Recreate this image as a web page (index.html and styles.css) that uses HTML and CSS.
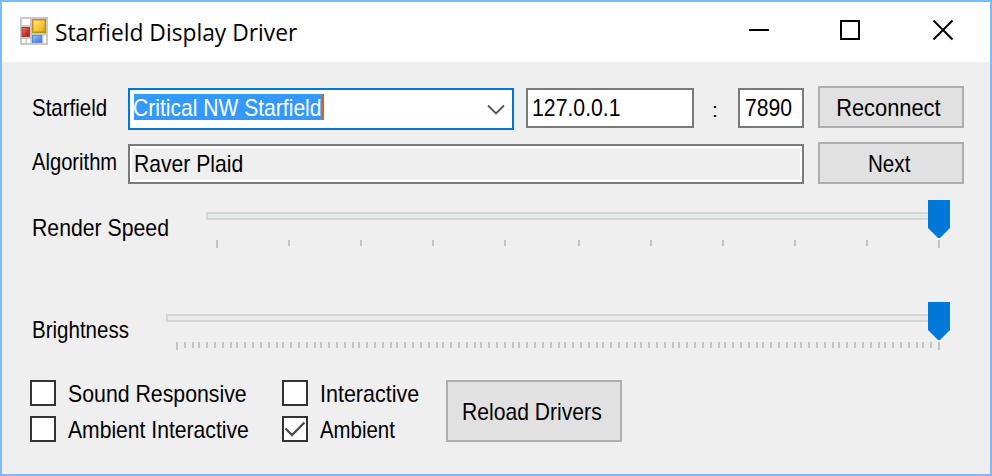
FILE: index.html
```html
<!DOCTYPE html>
<html lang="en">
<head>
<meta charset="utf-8">
<title>Starfield Display Driver</title>
<link rel="stylesheet" href="styles.css">
</head>
<body>
<div class="window">
  <header class="titlebar">
    <svg class="app-icon" width="28" height="28" viewBox="0 0 28 28">
      <defs>
        <linearGradient id="gold" x2="1" y2="1"><stop offset="0" stop-color="#ffe9a0"/><stop offset=".6" stop-color="#f8c530"/><stop offset="1" stop-color="#e0a010"/></linearGradient>
        <linearGradient id="blue" x2="1" y2="1"><stop offset="0" stop-color="#9cc4ff"/><stop offset="1" stop-color="#3c70dc"/></linearGradient>
        <linearGradient id="red" x2="1" y2="1"><stop offset="0" stop-color="#e8786c"/><stop offset="1" stop-color="#a81408"/></linearGradient>
      </defs>
      <rect width="28" height="28" fill="#c9c9c9"/>
      <rect x="2" y="2" width="8" height="6" fill="#fff"/>
      <rect x="2" y="22" width="3.5" height="4" fill="#fff"/>
      <rect x="7" y="22" width="3.5" height="4" fill="#fff"/>
      <rect x="23.5" y="18.500" width="2.500" height="7.500" fill="#fff"/>
      <rect x="2" y="10.500" width="7.500" height="9" fill="url(#red)" stroke="#b23a30"/>
      <rect x="12.700" y="2.700" width="12.600" height="12.600" fill="url(#gold)" stroke="#bd8f16" stroke-width="1.500"/>
      <rect x="12.500" y="18.500" width="9" height="7" fill="url(#blue)" stroke="#5b88dc"/>
    </svg>
    <h1 class="caption">Starfield Display Driver</h1>
    <svg class="controls" width="206" height="22" viewBox="0 0 206 22" fill="none" stroke="#000" stroke-width="2">
      <path d="M1 11h20M93 2h18v18H93z"/>
      <path d="M185.500 1.500l19 19m0-19l-19 19" stroke-width="1.900"/>
    </svg>
  </header>
  <main class="form">
    <div class="row row-source">
      <label class="label"><span class="text t-starfield">Starfield</span></label>
      <div class="combo">
        <div class="selected"><span class="text t-critical">Critical NW Starfield</span></div>
        <svg width="18" height="12" viewBox="0 0 18 12" fill="none" stroke="#555" stroke-width="1.800"><path d="M1 1.500l8 8 8-8"/></svg>
      </div>
      <div class="field ip"><span class="text t-ip">127.0.0.1</span></div>
      <span class="colon">:</span>
      <div class="field port"><span class="text t-port">7890</span></div>
      <button class="button"><span class="text t-reconnect">Reconnect</span></button>
    </div>
    <div class="row row-algorithm">
      <label class="label"><span class="text t-algorithm">Algorithm</span></label>
      <div class="field readonly"><span class="text t-raver">Raver Plaid</span></div>
      <button class="button"><span class="text t-next">Next</span></button>
    </div>
    <div class="row row-slider">
      <label class="label speed-label"><span class="text t-speed">Render Speed</span></label>
      <div class="slider"><div class="track"></div><svg class="ticks" data-intervals="10" data-span="722" height="8"></svg>
        <svg class="thumb" width="22" height="38" viewBox="0 0 22 38"><path d="M0 0h22v28L12 38h-2L0 28z"/></svg></div>
    </div>
    <div class="row row-slider second">
      <label class="label brightness-label"><span class="text t-brightness">Brightness</span></label>
      <div class="slider"><div class="track"></div><svg class="ticks" data-intervals="100" data-span="762" height="8"></svg>
        <svg class="thumb" width="22" height="38" viewBox="0 0 22 38"><path d="M0 0h22v28L12 38h-2L0 28z"/></svg></div>
    </div>
    <div class="row row-options">
      <div class="checks">
        <div class="check"><i class="box"></i><span class="text t-sound">Sound Responsive</span></div>
        <div class="check"><i class="box"></i><span class="text t-interactive">Interactive</span></div>
        <div class="check"><i class="box"></i><span class="text t-ambint">Ambient Interactive</span></div>
        <div class="check"><i class="box"><svg width="22" height="22" viewBox="0 0 22 22" fill="none" stroke="#4c4c4c" stroke-width="2.300"><path d="M1.500 10.500l6.500 6.500L20.500 4.500"/></svg></i><span class="text t-ambient">Ambient</span></div>
      </div>
      <button class="button reload"><span class="text t-reload">Reload Drivers</span></button>
    </div>
  </main>
</div>
<script src="ticks.js"></script>
</body>
</html>
```
FILE: styles.css
```css
* { box-sizing: border-box; }
body { margin: 0; }
.window {
  width: 992px; height: 476px;
  border: 2px solid #7eb9f9;
  background: #efefef;
  color: #000;
  font: 24px/28px "Liberation Sans", sans-serif;
  white-space: nowrap;
  overflow: hidden;
}
.titlebar {
  display: flex; align-items: center;
  height: 60px; padding: 0 36px 4px 18px;
  background: #fff;
}
.app-icon { margin-top: 2px; }
.caption {
  width: 300px; margin: 4px 0 0 7px;
  font: 400 24px/30px "Open Sans", sans-serif;
  transform: scaleX(.949); transform-origin: 0 50%;
}
.controls { margin-left: auto; }
.form { padding: 24px 26px 0 28px; }
.row { display: flex; align-items: flex-start; }
.label { margin-left: 2px; }

/* Condensed dialog lettering, fitted per string */
.text { display: inline-block; transform-origin: 0 50%; }
.t-starfield { transform: scaleX(.853); }
.t-algorithm { transform: scaleX(.84); }
.t-critical { transform: scaleX(.878); }
.t-ip { transform: scaleX(.885); }
.t-port { transform: scaleX(.88); }
.t-raver { transform: scaleX(.88); }
.t-speed { transform: scaleX(.885); }
.t-brightness { transform: scaleX(.855); }
.t-sound { transform: scaleX(.887); }
.t-ambint { transform: scaleX(.88); }
.t-interactive { transform: scaleX(.895); }
.t-ambient { transform: scaleX(.85); }
.button .text { transform-origin: 50% 50%; }
.t-reconnect { transform: translateX(-3px) scaleX(.91); }
.t-next { transform: translateX(-1.5px) scaleX(.86); }
.t-reload { transform: translateX(-2.5px) scaleX(.88); }

.row-source { height: 56px; }
.row-source .label { width: 96px; margin-top: 8px; }
.combo {
  display: flex; align-items: flex-start; justify-content: space-between;
  width: 386px; height: 42px; margin-top: 2px; padding: 4px 7px 0 4px;
  background: #fff; border: 2px solid #0078d7;
}
.combo svg { margin-top: 10px; }
.selected {
  width: 190px; height: 26px; line-height: 28px;
  background: #3399ff; color: #fff;
  border-right: 2px solid #c96a10;
}
.selected .text { margin-left: -1px; }
.field {
  height: 40px; margin-top: 2px; padding: 4px;
  background: #fff; border: 2px solid #7a7a7a;
}
.ip { width: 168px; margin-left: 12px; }
.colon { width: 44px; margin-top: 10px; padding-right: 2px; text-align: center; font-size: 21px; }
.port { width: 66px; padding-left: 5px; }
.button {
  display: flex; align-items: center; justify-content: center;
  width: 146px; height: 42px; margin: 0 0 0 14px; padding: 2px 0 0;
  background: #e1e1e1; border: 2px solid #adadad; border-radius: 0;
  color: inherit; font: inherit;
}
.row-algorithm { height: 58px; }
.row-algorithm .label { width: 96px; margin-top: 6px; }
.readonly { width: 676px; background: #efefef; box-shadow: inset 0 0 0 2px #fff; }
.row-slider { height: 102px; }
.row-slider .label { margin-top: 14px; }
.speed-label { width: 174px; }
.brightness-label { width: 134px; }
.slider { position: relative; flex: 1; padding: 12px 14px 0 0; }
.track { height: 8px; background: #e7eaea; border: 2px solid #d6d6d6; }
.ticks { display: block; width: 100%; margin: 20px 0 0 10px; fill: #c4c4c4; }
.thumb { position: absolute; right: 14px; top: 0; fill: #0078d7; }
.row-slider.second { height: 78px; }
.checks { display: grid; grid-template-columns: 252px 164px; row-gap: 10px; }
.check { display: flex; align-items: center; height: 26px; }
.check .text { padding-top: 1px; }
.box { width: 26px; height: 26px; margin-right: 12px; background: #fff; border: 2px solid #333; }
.box svg { display: block; }
.reload { width: 176px; height: 62px; margin-left: 0; }
```
FILE: ticks.js
```js
// Ticks sit on a two-pixel grid; the first and last are longer.
document.querySelectorAll('.ticks').forEach(function (svg) {
  var n = Number(svg.dataset.intervals);
  var span = Number(svg.dataset.span);
  var d = '';
  for (var i = 0; i <= n; i++) {
    var x = 2 * Math.round(span / 2 * i / n);
    var h = i === 0 || i === n ? 8 : 6;
    d += 'M' + x + ' 0h2v' + h + 'h-2z';
  }
  var path = document.createElementNS('http://www.w3.org/2000/svg', 'path');
  path.setAttribute('d', d);
  svg.appendChild(path);
});
```
